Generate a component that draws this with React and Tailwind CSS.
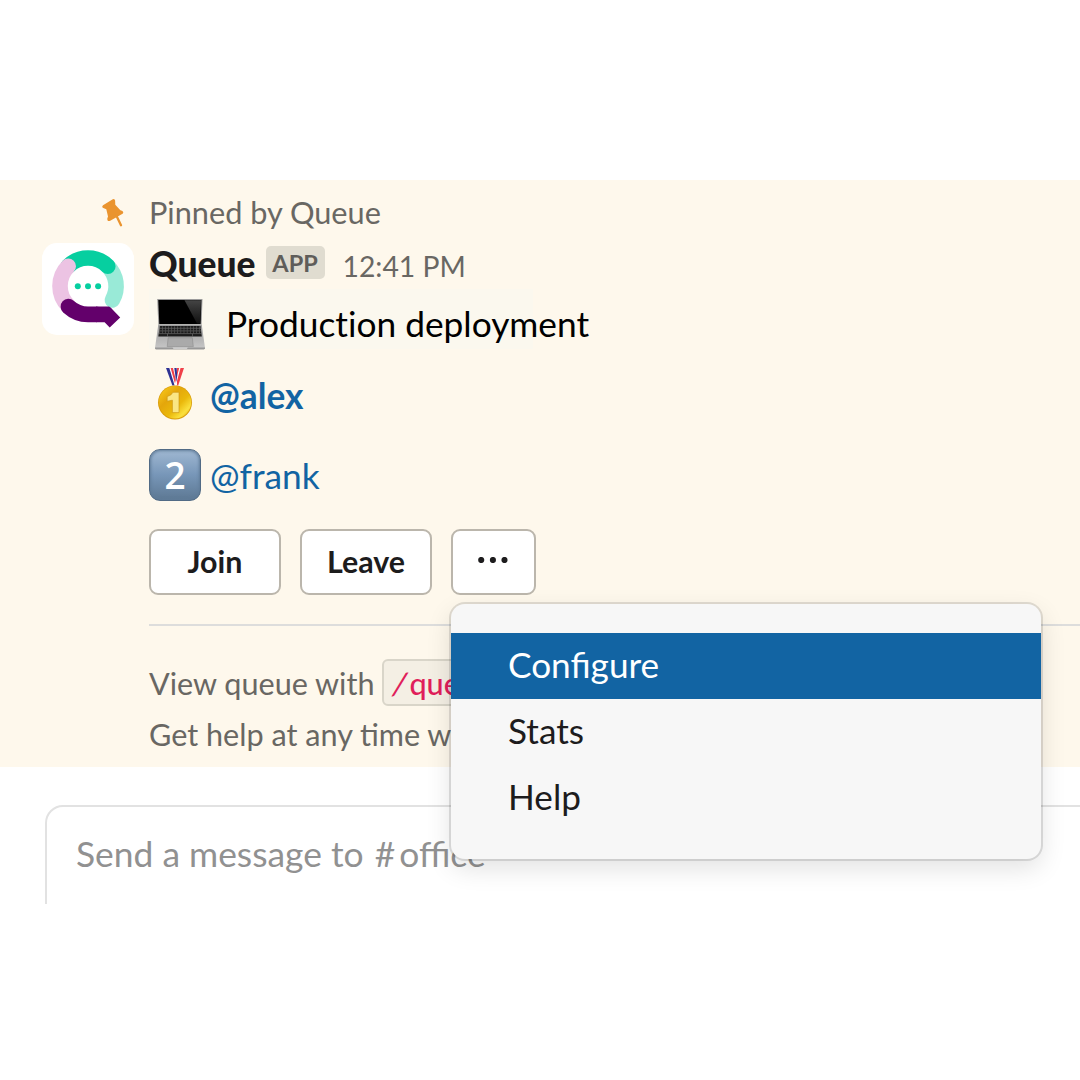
const MENU_ITEMS = ['Configure', 'Stats', 'Help'];

export default function App() {
  return (
    <div className="relative h-[1080px] w-[1080px] overflow-hidden bg-white pt-[180px] font-['Lato',sans-serif] text-[#1d1c1d]">
      <Message />
      <Composer />
      <OverflowMenu active="Configure" />
    </div>
  );
}

function Message() {
  return (
    <section className="h-[587px] bg-[#fef8ec] pt-[10px]">
      <div className="flex h-[46px] items-center text-[#696763]">
        <PinIcon className="ml-[101px] mr-[23px] h-[30px] w-[25px]" />
        <span className="whitespace-nowrap text-[30.7px] leading-[44px]">Pinned by Queue</span>
      </div>

      <div className="flex">
        <QueueLogo className="ml-[42px] mr-[14px] mt-[7px] h-[92px] w-[92px] shrink-0" />
        <div className="min-w-0 flex-1">
          <div className="flex h-[53px] items-center whitespace-nowrap">
            <span className="ml-[1px] mt-[2px] text-[35.4px] font-black leading-[53px]">Queue</span>
            <span className="ml-[10px] flex h-[33px] w-[59px] items-center justify-center rounded-[5px] bg-[#e0dcd0] pt-[2px] text-[23.5px] font-bold text-[#5f5d5a]">
              APP
            </span>
            <span className="ml-[18px] mt-[8px] text-[28.3px] text-[#696763]">12:41 PM</span>
          </div>

          <div className="ml-[1px] flex h-[60px] w-[384px] items-center whitespace-nowrap bg-[#fbf8ee]">
            <LaptopEmoji className="ml-[5px] mt-[10px] h-[52px] w-[52px] shrink-0" />
            <span className="ml-[20px] mt-[10px] text-[35.3px] text-black [font-variant-ligatures:none]">
              Production deployment
            </span>
          </div>

          <div className="mt-[13px] flex h-[64px] items-center">
            <MedalEmoji className="ml-[1px] h-[52px] w-[52px]" />
            <a className="ml-[9px] mt-[4px] text-[35.3px] font-bold text-[#1264a3]">@alex</a>
          </div>
          <div className="mt-[17px] flex h-[64px] items-center">
            <TwoEmoji className="ml-[1px] h-[52px] w-[52px]" />
            <a className="ml-[9px] mt-[3px] text-[35.3px] text-[#1264a3]">@frank</a>
          </div>

          <div className="ml-[1px] mt-[22px] flex gap-[19px]">
            <ActionButton className="w-[132px]">Join</ActionButton>
            <ActionButton className="w-[132px]">Leave</ActionButton>
            <ActionButton className="w-[85px]">
              <svg viewBox="0 0 30 6" className="mb-[4px] mr-[1px] h-[6px] w-[30px]" fill="#1d1c1d">
                <circle cx="3.2" cy="3" r="3.1" />
                <circle cx="14.9" cy="3" r="3.1" />
                <circle cx="26.5" cy="3" r="3.1" />
              </svg>
            </ActionButton>
          </div>

          <div className="ml-[1px] mt-[29px] h-[2px] bg-[#dddddc]" />

          <div className="mt-[32px] flex h-[48px] items-center whitespace-nowrap text-[30.6px] text-[#696763]">
            <span className="ml-[1px] mt-[3px]">View queue with</span>
            <code className="ml-[8px] flex h-[47px] w-[130px] items-center rounded-[6px] border-2 border-[#d9d5c9] bg-[#f4efe4] pl-[9px] pt-[3px] font-['Lato',sans-serif] text-[30.6px] font-medium text-[#e01e5a]">
              <span className="mr-[2px] -skew-x-12">/</span>queue
            </code>
          </div>
          <p className="ml-[1px] mt-[1px] whitespace-nowrap text-[30.6px] leading-[56px] text-[#696763]">
            Get help at any time with
          </p>
        </div>
      </div>
    </section>
  );
}

function ActionButton({ className, children }) {
  return (
    <button
      type="button"
      className={`flex h-[66px] items-center justify-center rounded-[9px] border-2 border-[#bbb6ac] bg-white text-[30.4px] font-bold ${className}`}
    >
      {children}
    </button>
  );
}

function Composer() {
  return (
    <div className="mt-[38px] h-[99px] overflow-hidden pl-[45px]">
      <div className="h-[130px] w-[1100px] rounded-[18px] border-2 border-[#e2e2e2] pl-[29px] pt-[23px]">
        <span className="whitespace-nowrap text-[35.4px] leading-[48px] text-[#919191]">
          Send a message to <span className="ml-[2px] mr-[4px]">#</span>office
        </span>
      </div>
    </div>
  );
}

function OverflowMenu({ active }) {
  return (
    <ul className="absolute left-[451px] top-[604px] h-[255px] w-[590px] rounded-[14px] bg-[#f7f7f7] pt-[29px] shadow-[0_0_0_2px_rgba(29,28,29,0.13),0_9px_26px_rgba(0,0,0,0.12)]">
      {MENU_ITEMS.map((item) => (
        <li
          key={item}
          className={`h-[66px] pl-[57px] text-[35.2px] leading-[62px] ${item === active ? 'bg-[#1264a3] text-white' : ''}`}
        >
          {item}
        </li>
      ))}
    </ul>
  );
}

function PinIcon({ className }) {
  return (
    <svg viewBox="0 0 25 30" className={className} fill="#ea942f">
      <path d="M2 7.2 11.8 1.2Q13.8.5 14.1 2.6L14.3 6.8 19.4 12.3Q22 12.6 22.3 14.2 22.3 15.5 20.7 16.3L9.2 22.7Q7.2 23.8 6.4 21.9 5.9 20.7 7 18.6L5.3 11.3 1.7 9.8Q.6 8.4 2 7.2Z" />
      <path d="m15.8 18.5 4.2 8.8" stroke="#ea942f" strokeWidth="2.3" strokeLinecap="round" />
    </svg>
  );
}

function QueueLogo({ className }) {
  return (
    <svg viewBox="0 0 92 92" className={className}>
      <rect width="92" height="92" rx="15" fill="#fff" />
      <g fill="none" strokeWidth="15.6" strokeLinecap="round">
        <path d="M65.8 23.2A28 28 0 0 1 70.4 57" stroke="#99ead7" />
        <path d="M26.2 23.2A28 28 0 0 1 65.8 23.2" stroke="#06cfa0" />
        <path d="M26.2 62.8A28 28 0 0 1 26.2 23.2" stroke="#ecc3e3" />
        <path d="M26.4 63.6Q35 71.4 46 71.4H54" stroke="#63006b" />
      </g>
      <path d="M54 63.6H67Q69.2 64.4 70.5 66.6L78.2 74.4 67.7 84.5 62.6 79.2H54Z" fill="#63006b" />
      <g fill="#06cfa0">
        <circle cx="35.8" cy="43.3" r="3" />
        <circle cx="46" cy="43.3" r="3" />
        <circle cx="56.1" cy="43.3" r="3" />
      </g>
    </svg>
  );
}

function LaptopEmoji({ className }) {
  return (
    <svg viewBox="0 0 52 52" className={className}>
      <defs>
        <linearGradient id="glare" x1="0" y1="0" x2="0" y2="1">
          <stop offset="0" stopColor="#444" />
          <stop offset="1" stopColor="#111" />
        </linearGradient>
        <linearGradient id="deck" x1="0" y1="0" x2="0" y2="1">
          <stop offset="0" stopColor="#9a9a9a" />
          <stop offset="1" stopColor="#c6c6c6" />
        </linearGradient>
      </defs>
      <path d="M3.2 1H48.5L47.6 26.5H4.3Z" fill="#9b9b9b" />
      <path d="M4.3 1.9H47.4L46.6 26H5.3Z" fill="#000" />
      <path d="M30.5 2.2H47L46.2 25.5H43Z" fill="url(#glare)" />
      <path d="M4.3 26.5H47.7L51 50H1Z" fill="url(#deck)" />
      <path d="M5.8 28H46.5L47.8 38.5H4.3Z" fill="#1c1c1c" />
      <g stroke="#858585" strokeWidth=".5">
        <path d="M5 30.3H47M4.7 32.9H47.2M4.4 35.6H47.5" />
        <path
          d="M5 29.2H47M5 31.6H47M5 34.3H47.5"
          strokeWidth="2"
          strokeDasharray=".4 2.7"
        />
        <path d="M13.5 35.8V38.5M38.5 35.8V38.5" />
      </g>
      <path d="M14.2 39.7H38.3L39.3 48.6H13.2Z" fill="#aaa" stroke="#8c8c8c" strokeWidth=".6" />
      <path d="M1 49.5H51V50.7Q50 51.6 48 51.6H4Q1.5 51.6 1 50.7Z" fill="#989898" />
      <path d="M18.5 49.5H33.7L33 50.7H19.5Z" fill="#ddd" />
    </svg>
  );
}

function MedalEmoji({ className }) {
  return (
    <svg viewBox="0 0 52 52" className={className}>
      <defs>
        <linearGradient id="gold" x1="0" y1="0" x2="1" y2="1">
          <stop offset="0" stopColor="#fcd01e" />
          <stop offset=".35" stopColor="#e4a60b" />
          <stop offset=".6" stopColor="#eab80b" />
          <stop offset=".8" stopColor="#fbe13e" />
          <stop offset="1" stopColor="#d99c08" />
        </linearGradient>
      </defs>
      <path d="M25.4 0H35L29 17.5H24.5Z" fill="#fff" />
      <path d="M31.5 0H35L29.2 17.5H26.8Z" fill="#f04049" />
      <path d="M27.8 0H30.2L26.8 13 25 17.5Z" fill="#f04049" />
      <path d="M17 0H27.4L28 17.5H23.8Z" fill="#fff" />
      <path d="M17 0H20.3L25.6 17.5H23.4Z" fill="#2e3192" />
      <path d="M21.6 0H24L26.8 12 26 15.5Z" fill="#f04049" />
      <path d="M25.3 0H27.6L28.2 8 27.2 14Z" fill="#2e3192" />
      <circle cx="26" cy="34.5" r="17" fill="#d99b08" />
      <circle cx="26" cy="34.2" r="16.2" fill="url(#gold)" />
      <path
        d="M18.2 28.6Q22.4 27.6 24 24.3H30V44.6H23.4V32.2L18.2 33.2Z"
        fill="#fae684"
        stroke="#c99210"
        strokeWidth=".6"
      />
    </svg>
  );
}

function TwoEmoji({ className }) {
  return (
    <span
      className={`flex items-center justify-center rounded-[11px] border border-[#526b85] bg-linear-to-b from-[#a0b8d2] via-[#7796b8] to-[#5d7893] pb-[2px] font-['Open_Sans',sans-serif] text-[37px] font-semibold leading-none text-white shadow-[inset_0_0_3px_1px_#607c99] ${className}`}
    >
      2
    </span>
  );
}
